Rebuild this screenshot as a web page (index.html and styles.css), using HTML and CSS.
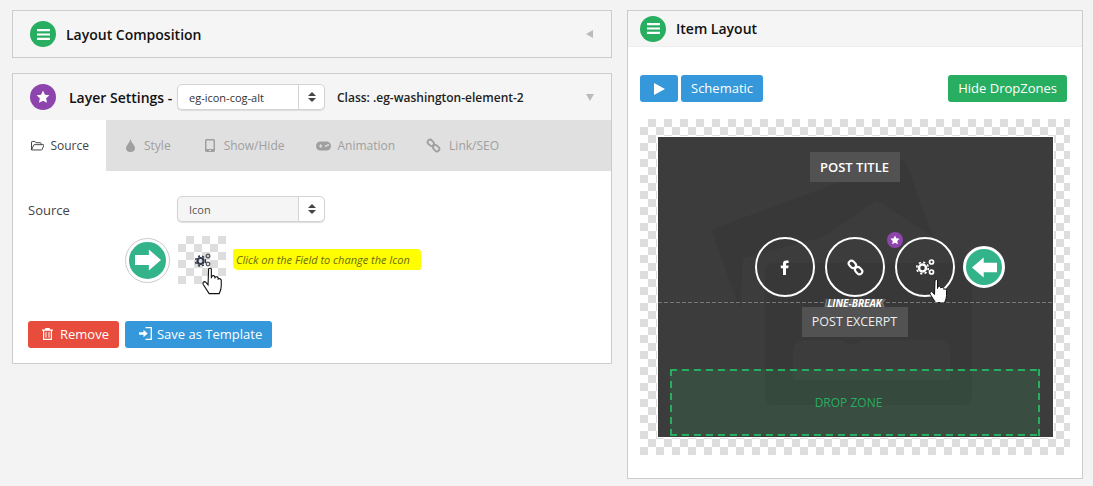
FILE: index.html
```html
<!DOCTYPE html>
<html lang="en">
<head>
    <meta charset="UTF-8">
    <title>Item Skin Editor</title>
    <link rel="stylesheet" href="styles.css">
</head>
<body>
    <div class="page">
        <div class="col-left">
            <div class="box box-closed">
                <div class="box-head">
                    <span class="round green">
                        <svg width="13" height="11" viewBox="0 0 13 11"><path d="M0 0h13v2.200H0zM0 4.400h13v2.200H0zM0 8.800h13V11H0z" fill="#fff"/></svg>
                    </span>
                    <span class="box-title first">Layout Composition</span>
                    <span class="arrow-left"></span>
                </div>
            </div>

            <div class="box">
                <div class="box-head">
                    <span class="round purple">
                        <svg width="14" height="14" viewBox="0 0 24 24"><path d="M12 1l3.300 7 7.700 1-5.600 5.300 1.400 7.700-6.800-3.700L5.200 22l1.400-7.700L1 9l7.700-1z" fill="#fff"/></svg>
                    </span>
                    <span class="box-title second">Layer Settings -</span>
                    <div class="select select-white">
                        <span class="select-text">eg-icon-cog-alt</span>
                        <span class="select-btn"><i class="up"></i><i class="down"></i></span>
                    </div>
                    <span class="class-name">Class: .eg-washington-element-2</span>
                    <span class="arrow-down"></span>
                </div>

                <div class="tabs">
                    <div class="tab active">
                        <svg width="16" height="12" viewBox="0 0 16 12"><path d="M.6 10.800V1.400q0-.8.8-.8h3.200l1.200 1.500h5.400q.8 0 .8.8v1.300M.6 10.800l2.600-6q.2-.4.700-.4h11q.9 0 .5.800l-2.200 5q-.2.500-.8.500H1.200q-.6 0-.6-.7z" fill="none" stroke="#3a3a3a" stroke-width="1.100"/></svg>
                        Source
                    </div>
                    <div class="tab">
                        <svg width="9" height="13" viewBox="0 0 9 13"><path d="M4.500 0q.6 2.500 2.700 5.300Q9 7.500 9 8.700 9 13 4.500 13T0 8.700q0-1.200 1.800-3.400Q3.900 2.500 4.500 0z" fill="#9f9f9f"/></svg>
                        Style
                    </div>
                    <div class="tab">
                        <svg width="10" height="13" viewBox="0 0 10 13"><path fill-rule="evenodd" d="M1.500 0h7Q10 0 10 1.500v10Q10 13 8.500 13h-7Q0 13 0 11.500v-10Q0 0 1.500 0zM1.500 1.500v8.500h7V1.500zM4 11v1h2v-1z" fill="#9f9f9f"/></svg>
                        Show/Hide
                    </div>
                    <div class="tab tab-anim">
                        <svg width="15" height="10" viewBox="0 0 15 10"><rect width="15" height="9" y=".5" rx="4.500" fill="#9f9f9f"/><path d="M3 5h3.500M4.700 3.300v3.400" stroke="#e0e0e0" stroke-width="1.200"/><circle cx="10" cy="5" r="1.100" fill="#e0e0e0"/><circle cx="12" cy="4" r="1" fill="#e0e0e0"/></svg>
                        Animation
                    </div>
                    <div class="tab tab-link">
                        <svg class="link-icon" width="13" height="13" viewBox="0 0 16 16"><g transform="rotate(45 8 8)" fill="none" stroke="#9f9f9f" stroke-width="2.200"><rect x="-1" y="5" width="8.500" height="6" rx="3"/><rect x="8.500" y="5" width="8.500" height="6" rx="3"/></g></svg>
                        Link/SEO
                    </div>
                </div>

                <div class="tab-body">
                    <div class="source-row">
                        <span class="source-label">Source</span>
                        <div class="select select-grey">
                            <span class="select-text">Icon</span>
                            <span class="select-btn"><i class="up"></i><i class="down"></i></span>
                        </div>
                    </div>

                    <div class="icon-row">
                        <span class="big-arrow">
                            <svg width="26" height="22" viewBox="0 0 31 25"><path d="M0 6.500h16.500V0L31 12.500 16.500 25v-6.500H0z" fill="#fff"/></svg>
                        </span>
                        <div class="icon-field">
                            <svg class="gears-small" width="16" height="14" viewBox="0 0 16 14"><circle cx="5.500" cy="8" r="3" fill="none" stroke="#33384a" stroke-width="2.200"/><circle cx="5.500" cy="8" r="5" fill="none" stroke="#33384a" stroke-width="1.500" stroke-dasharray="2 2.100"/><circle cx="13" cy="3" r="1.800" fill="none" stroke="#5a5f6a" stroke-width="1.400"/><circle cx="13" cy="11" r="1.800" fill="none" stroke="#5a5f6a" stroke-width="1.400"/></svg>
                            <svg class="hand hand-field" width="22" height="29" viewBox="0 0 20 26"><path d="M6 1.500q1.500-1 2.500 0V10l.5-2q2-1 2.500.6l.3 1 .4-.6q2-.8 2.500.8v1l.5-.3q2-.4 2.300 1.500v5q0 3-1.800 7H6.500L1 15.500q-.6-2 1.200-2.400 1.200 0 2 1.400l1.300 1.500z" fill="#fff" stroke="#111" stroke-width="1"/></svg>
                        </div>
                        <span class="hint">Click on the Field to change the Icon</span>
                    </div>

                    <div class="actions">
                        <button class="btn btn-red">
                            <svg width="11" height="12" viewBox="0 0 11 12"><path fill-rule="evenodd" d="M3.500 0h4l.7 1.500H11v1.200h-1V12H1V2.700H0V1.500h2.800zM2.200 2.700v8.100h6.600V2.700zM3.500 4h1v5.500h-1zM6.500 4h1v5.500h-1z" fill="#fff"/></svg>
                            Remove
                        </button>
                        <button class="btn btn-blue btn-save">
                            <svg width="13" height="13" viewBox="0 0 13 13"><path d="M6.500.7h5.800v11.600H6.500" fill="none" stroke="#fff" stroke-width="1.300"/><path d="M0 5.300h4.500V2.800L8.700 6.500 4.500 10.200V7.700H0z" fill="#fff"/></svg>
                            Save as Template
                        </button>
                    </div>
                </div>
            </div>
        </div>

        <div class="box col-right">
            <div class="box-head layout-head">
                <span class="round green">
                    <svg width="13" height="11" viewBox="0 0 13 11"><path d="M0 0h13v2.200H0zM0 4.400h13v2.200H0zM0 8.800h13V11H0z" fill="#fff"/></svg>
                </span>
                <span class="box-title third">Item Layout</span>
            </div>
            <div class="layout-body">
                <div class="toolbar">
                    <button class="btn btn-blue btn-play">
                        <svg width="11" height="12" viewBox="0 0 11 12"><path d="M0 0l11 6-11 6z" fill="#fff"/></svg>
                    </button>
                    <button class="btn btn-blue btn-schematic">Schematic</button>
                    <button class="btn btn-green">Hide DropZones</button>
                </div>

                <div class="checker">
                    <div class="preview">
                        <svg class="watermark" width="395" height="300" viewBox="0 0 395 300">
                            <path d="M60 90L240 24q7-2 9 4l26 72-56-37-54 37-80 21-3 52-27-76q-2-5 5-7z" fill="#383838"/>
                            <path d="M107 136q0-10 10-10h187q10 0 10 10v122q0 10-10 10H117q-10 0-10-10z" fill="#383838"/>
                            <path d="M135 243v-30q0-8 10-10h40l9 5 10-5h76q12 0 12 10v30z" fill="#3c3c3c"/>
                        </svg>
                        <div class="post-title">POST TITLE</div>
                        <div class="circles">
                            <span class="circle">
                                <svg width="10" height="15" viewBox="0 0 10 15"><path d="M3 15V8.200H.8V5.500H3V3.600Q3 .4 6.300.4h2.300v2.700H7q-1 0-1 1.100v1.300h2.600l-.4 2.700H6V15z" fill="#fff"/></svg>
                            </span>
                            <span class="circle">
                                <svg class="link-icon" width="15" height="15" viewBox="0 0 16 16"><g transform="rotate(45 8 8)" fill="none" stroke="#fff" stroke-width="2.200"><rect x="-1" y="5" width="8.500" height="6" rx="3"/><rect x="8.500" y="5" width="8.500" height="6" rx="3"/></g></svg>
                            </span>
                            <span class="circle circle-active">
                                <span class="star-badge">
                                    <svg width="10" height="10" viewBox="0 0 24 24"><path d="M12 1l3.300 7 7.700 1-5.600 5.300 1.400 7.700-6.800-3.700L5.200 22l1.400-7.700L1 9l7.700-1z" fill="#fff"/></svg>
                                </span>
                                <svg width="19" height="16" viewBox="0 0 19 16"><circle cx="6.500" cy="9" r="3.500" fill="none" stroke="#fff" stroke-width="2.500"/><circle cx="6.500" cy="9" r="5.800" fill="none" stroke="#fff" stroke-width="1.600" stroke-dasharray="2.200 2.350"/><circle cx="15.500" cy="3" r="2" fill="none" stroke="#fff" stroke-width="1.700"/><circle cx="15.500" cy="13" r="2" fill="none" stroke="#fff" stroke-width="1.700"/></svg>
                                <svg class="hand hand-circle" width="20" height="27" viewBox="0 0 20 26"><path d="M6 1.500q1.500-1 2.500 0V10l.5-2q2-1 2.500.6l.3 1 .4-.6q2-.8 2.500.8v1l.5-.3q2-.4 2.300 1.500v5q0 3-1.800 7H6.500L1 15.500q-.6-2 1.200-2.400 1.200 0 2 1.400l1.300 1.500z" fill="#fff" stroke="#111" stroke-width="1"/></svg>
                            </span>
                            <span class="big-arrow big-arrow-dark">
                                <svg width="25" height="21" viewBox="0 0 31 25"><path d="M31 6.500H14.500V0L0 12.500 14.500 25v-6.500H31z" fill="#fff"/></svg>
                            </span>
                        </div>
                        <div class="line-break"><span>LINE-BREAK</span></div>
                        <div class="post-excerpt">POST EXCERPT</div>
                        <div class="drop-zone">DROP ZONE</div>
                    </div>
                </div>
            </div>
        </div>
    </div>
</body>
</html>
```

FILE: styles.css
```css
* {
    padding: 0;
    margin: 0;
    box-sizing: border-box;
}
body {
    background: #f3f3f3;
    font-family: "Open Sans", "Liberation Sans", sans-serif;
    font-size: 13px;
    color: #444;
    overflow: hidden;
}
.page {
    display: flex;
    align-items: flex-start;
    gap: 15px;
    padding: 10px 10px 0 12px;
}
.col-left {
    width: 600px;
    display: flex;
    flex-direction: column;
    gap: 15px;
}
.col-right {
    width: 456px;
    height: 469px;
}
.box {
    border: 1px solid #ccc;
    background: #fff;
}
.box-closed {
    background: #f5f5f5;
}
.box-head {
    display: flex;
    align-items: center;
    height: 46px;
    padding-left: 17px;
    background: #f5f5f5;
}
.layout-head {
    height: 36px;
    padding-left: 12px;
    border-bottom: 1px solid #eee;
}
.round {
    width: 26px;
    height: 26px;
    border-radius: 50%;
    display: flex;
    align-items: center;
    justify-content: center;
    flex: none;
}
.green {
    background: #27ae60;
}
.purple {
    background: #8e44ad;
}
.box-title {
    font-size: 14px;
    font-weight: 600;
    color: #111;
}
.box-title.first {
    margin-left: 10px;
}
.box-title.second {
    margin-left: 13px;
    width: 108px;
    flex: none;
}
.box-title.third {
    margin-left: 10px;
}
.arrow-left {
    margin-left: auto;
    margin-right: 18px;
    border-top: 4px solid transparent;
    border-bottom: 4px solid transparent;
    border-right: 7px solid #bbb;
}
.arrow-down {
    margin-left: auto;
    margin-right: 17px;
    border-left: 4px solid transparent;
    border-right: 4px solid transparent;
    border-top: 7px solid #bbb;
}
.class-name {
    margin-left: 12px;
    font-size: 12px;
    font-weight: 600;
    color: #222;
}

/* selects */
.select {
    width: 148px;
    height: 26px;
    display: flex;
    align-items: center;
    border: 1px solid #d4d4d4;
    border-radius: 5px;
    box-shadow: 0 1px 1px #ddd;
    font-size: 11px;
    flex: none;
}
.select-white {
    background: #fff;
    color: #333;
}
.select-grey {
    background: #f5f5f5;
    color: #555;
}
.select-text {
    flex: 1;
    padding-left: 11px;
}
.select-btn {
    width: 26px;
    height: 100%;
    background: #fff;
    border-left: 1px solid #d4d4d4;
    border-radius: 0 5px 5px 0;
    display: flex;
    flex-direction: column;
    align-items: center;
    justify-content: center;
    gap: 2px;
}
.select-btn .up {
    border-left: 4px solid transparent;
    border-right: 4px solid transparent;
    border-bottom: 4px solid #444;
}
.select-btn .down {
    border-left: 4px solid transparent;
    border-right: 4px solid transparent;
    border-top: 4px solid #444;
}

/* tabs */
.tabs {
    display: flex;
    height: 51px;
    background: #e0e0e0;
}
.tab {
    display: flex;
    align-items: center;
    gap: 9px;
    padding: 0 17px;
    font-size: 12px;
    color: #9f9f9f;
}
.tab-anim {
    gap: 6px;
    padding-left: 15px;
}
.tab-link {
    padding-left: 15px;
}
.link-icon {
    overflow: visible;
}
.tab.active {
    width: 93px;
    margin-right: 3px;
    background: #fff;
    color: #444;
    padding-left: 18px;
    gap: 6px;
}
.tab-body {
    padding: 25px 15px 15px;
}
.source-row {
    display: flex;
    align-items: center;
}
.source-label {
    width: 149px;
    margin-top: 2px;
    font-size: 13px;
    color: #444;
}
.icon-row {
    display: flex;
    align-items: center;
    margin-top: 14px;
    padding-left: 98px;
}
.big-arrow {
    width: 43px;
    height: 43px;
    border-radius: 50%;
    background: #33b38a;
    border: 3px solid #fff;
    outline: 1px solid #ccc;
    display: flex;
    align-items: center;
    justify-content: center;
    flex: none;
}
.icon-field {
    position: relative;
    width: 48px;
    height: 48px;
    margin-left: 9px;
    padding-left: 2px;
    background-color: #fff;
    background-image: conic-gradient(#ddd 25%, #fff 25% 50%, #ddd 50% 75%, #fff 75%);
    background-size: 16px 16px;
    display: flex;
    align-items: center;
    justify-content: center;
}
.hand {
    position: absolute;
}
.hand-field {
    left: 24px;
    top: 31px;
}
.hint {
    margin-left: 7px;
    margin-bottom: 2px;
    padding: 3px 11px 3px 3px;
    background: #ffff00;
    border-radius: 2px 4px 2px 5px;
    font-size: 11px;
    font-style: italic;
    color: #6b6b10;
}
.actions {
    display: flex;
    gap: 6px;
    margin-top: 37px;
}
.btn {
    display: inline-flex;
    align-items: center;
    gap: 7px;
    height: 27px;
    border: 0;
    border-radius: 3px;
    font-family: inherit;
    font-size: 13px;
    color: #fff;
    padding: 0 10px 2px 14px;
}
.btn-red {
    background: #e74c3c;
}
.btn-blue {
    background: #3498db;
}
.btn-save {
    gap: 5px;
    padding-right: 10px;
}
.btn-green {
    background: #27ae60;
    margin-left: auto;
    padding: 0 10px 2px;
}

/* right panel */
.layout-body {
    padding: 28px 12px 0;
}
.toolbar {
    display: flex;
    gap: 3px;
    padding-right: 3px;
}
.btn-play {
    width: 38px;
    justify-content: center;
    padding: 0;
}
.btn-schematic {
    padding: 0 10px 2px;
}
.checker {
    width: 430px;
    height: 336px;
    margin-top: 17px;
    padding: 17px;
    background-color: #fff;
    background-image: conic-gradient(#ddd 25%, #fff 25% 50%, #ddd 50% 75%, #fff 75%);
    background-size: 16px 16px;
}
.preview {
    position: relative;
    width: 397px;
    height: 302px;
    border: 1px solid #fff;
    background: #3c3c3c;
    display: flex;
    flex-direction: column;
    align-items: center;
    overflow: hidden;
    padding-top: 15px;
}
.watermark {
    position: absolute;
    left: 0;
    top: 0;
}
.post-title,
.post-excerpt {
    position: relative;
    height: 30px;
    line-height: 30px;
    text-align: center;
    background: #525252;
    color: #fff;
    margin-right: 2px;
}
.post-title {
    width: 90px;
    font-size: 13px;
    font-weight: 600;
}
.post-excerpt {
    width: 106px;
    font-size: 12.500px;
    color: #eee;
    margin-top: 4px;
}
.circles {
    position: relative;
    display: flex;
    align-items: center;
    gap: 10px;
    margin-top: 55px;
    margin-left: 49px;
}
.circle {
    position: relative;
    width: 60px;
    height: 60px;
    border: 2px solid #fff;
    border-radius: 50%;
    display: flex;
    align-items: center;
    justify-content: center;
}
.big-arrow-dark {
    outline: 0;
    width: 42px;
    height: 42px;
    margin-left: -2px;
}
.star-badge {
    position: absolute;
    left: -10px;
    top: -7px;
    width: 16px;
    height: 16px;
    border-radius: 50%;
    background: #8e44ad;
    display: flex;
    align-items: center;
    justify-content: center;
}
.hand-circle {
    left: 32px;
    top: 39px;
}
.line-break {
    position: relative;
    width: 100%;
    height: 1px;
    margin-top: 5px;
    background: repeating-linear-gradient(90deg, #777 0 4px, transparent 4px 6px);
}
.line-break span {
    position: absolute;
    left: 50%;
    top: -4px;
    transform: translateX(-50%);
    padding: 0 4px;
    margin-left: -1px;
    background: #3c3c3c;
    font-size: 10px;
    font-weight: 700;
    font-style: italic;
    line-height: 10px;
    white-space: nowrap;
    color: #fff;
    text-shadow: -3px 0 #777, 3px 0 #777;
}
.drop-zone {
    position: relative;
    width: 370px;
    height: 67px;
    margin-top: 32px;
    margin-right: 2px;
    padding-right: 12px;
    background-color: rgba(39, 174, 96, .15);
    background-image:
        repeating-linear-gradient(90deg, #27ae60 0 7px, transparent 7px 12px),
        repeating-linear-gradient(90deg, #27ae60 0 7px, transparent 7px 12px),
        repeating-linear-gradient(0deg, #27ae60 0 7px, transparent 7px 12px),
        repeating-linear-gradient(0deg, #27ae60 0 7px, transparent 7px 12px);
    background-size: 100% 2px, 100% 2px, 2px 100%, 2px 100%;
    background-position: top, bottom, left, right;
    background-repeat: no-repeat;
    color: #27ae60;
    font-size: 12px;
    text-align: center;
    line-height: 67px;
}
```
